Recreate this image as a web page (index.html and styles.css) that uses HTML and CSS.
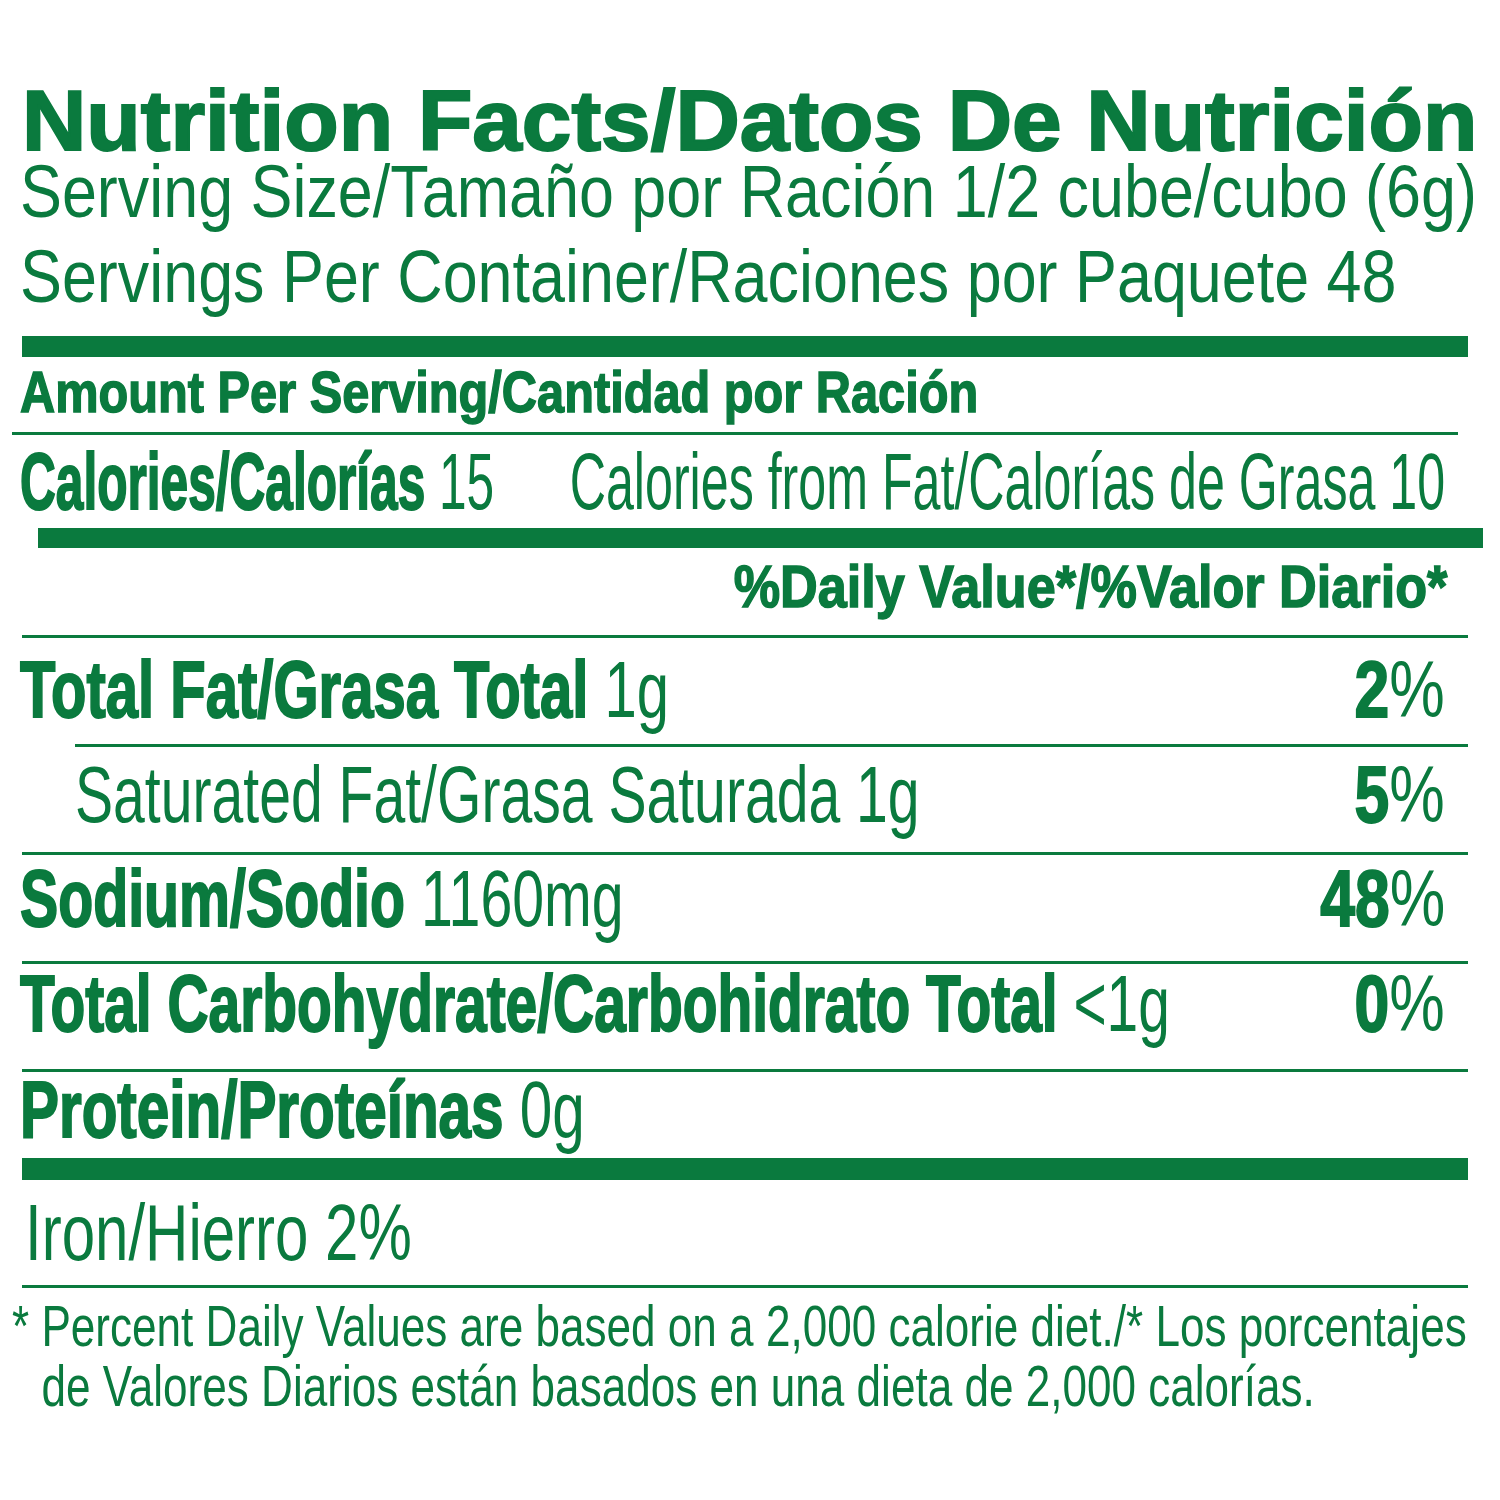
FILE: index.html
```html
<!DOCTYPE html>
<html lang="es">
<head>
<meta charset="utf-8">
<title>Nutrition Facts / Datos De Nutrición</title>
<link rel="stylesheet" href="styles.css">
</head>
<body>
<div class="label">
  <h1 class="title"><span class="sx">Nutrition Facts/Datos De Nutrición</span></h1>
  <div class="serving"><span class="sx">Serving Size/Tamaño por Ración 1/2 cube/cubo (6g)</span></div>
  <div class="serving s2"><span class="sx">Servings Per Container/Raciones por Paquete 48</span></div>

  <div class="bar bar1"></div>
  <div class="amount"><span class="sx">Amount Per Serving/Cantidad por Ración</span></div>
  <div class="rule rule-amount"></div>

  <div class="row cal">
    <div class="cell cal-left"><span class="sx"><b>Calories/Calorías</b> 15</span></div>
    <div class="cell cal-right"><span class="sx">Calories from Fat/Calorías de Grasa 10</span></div>
  </div>
  <div class="bar bar2"></div>

  <div class="dv"><span class="sx">%Daily Value*/%Valor Diario*</span></div>
  <div class="rule rule-dv"></div>

  <div class="row fat">
    <div class="cell"><span class="sx"><b>Total Fat/Grasa Total</b> 1g</span></div>
    <div class="cell pct"><span class="sx"><b>2</b>%</span></div>
  </div>
  <div class="rule rule-sub"></div>

  <div class="row sat">
    <div class="cell"><span class="sx">Saturated Fat/Grasa Saturada 1g</span></div>
    <div class="cell pct"><span class="sx"><b>5</b>%</span></div>
  </div>
  <div class="rule rule-sodium"></div>

  <div class="row sodium">
    <div class="cell"><span class="sx"><b>Sodium/Sodio</b> 1160mg</span></div>
    <div class="cell pct"><span class="sx"><b>48</b>%</span></div>
  </div>
  <div class="rule rule-carb"></div>

  <div class="row carb">
    <div class="cell"><span class="sx"><b>Total Carbohydrate/Carbohidrato Total</b> &lt;1g</span></div>
    <div class="cell pct"><span class="sx"><b>0</b>%</span></div>
  </div>
  <div class="rule rule-protein"></div>

  <div class="row protein">
    <div class="cell"><span class="sx"><b>Protein/Proteínas</b> 0g</span></div>
  </div>
  <div class="bar bar3"></div>

  <div class="iron"><span class="sx">Iron/Hierro 2%</span></div>
  <div class="rule rule-iron"></div>

  <div class="foot">
    <span class="sx">
      <span class="fn-line">* Percent Daily Values are based on a 2,000 calorie diet./* Los porcentajes</span>
      <span class="fn-line indent">de Valores Diarios están basados en una dieta de 2,000 calorías.</span>
    </span>
  </div>
</div>
</body>
</html>
```

FILE: styles.css
```css
html, body {
  margin: 0;
  padding: 0;
  background: #ffffff;
  overflow: hidden;
}

body {
  color: #0a7a3e;
  font-family: "Liberation Sans", Arial, sans-serif;
}

.label {
  margin-left: 20px;
  width: 1448px;
  padding-top: 85px;
}

.sx {
  display: inline-block;
  max-width: 100%;
  white-space: nowrap;
  transform: scaleX(var(--k, 1));
  transform-origin: left center;
}

b {
  font-weight: 700;
  -webkit-text-stroke: 2px #0a7a3e;
}

.title {
  margin: 0;
  padding-left: 2px;
  font-size: 86px;
  line-height: 70px;
  font-weight: 700;
  -webkit-text-stroke: 2px #0a7a3e;
  --k: 1.036;
}

.serving {
  margin-top: 5px;
  font-size: 75px;
  line-height: 62px;
  --k: 0.838;
}

.serving.s2 {
  margin-top: 23px;
}

.bar {
  background: #0a7a3e;
  height: 21px;
}

.bar1 {
  margin-top: 29px;
  margin-left: 2px;
}

.amount {
  margin-top: 6px;
  font-size: 58px;
  line-height: 58px;
  font-weight: 700;
  -webkit-text-stroke: 1.5px #0a7a3e;
  --k: 0.84;
}

.rule {
  background: #0a7a3e;
  height: 3px;
  margin-left: 2px;
}

.rule-amount {
  margin-top: 11px;
  margin-left: -8px;
  margin-right: 10px;
}

.row {
  display: grid;
  grid-template-columns: minmax(0, 1fr) auto;
  font-size: 80px;
  line-height: 76px;
}

.cell {
  min-width: 0;
}

.cal {
  margin-top: 9px;
}

.cal-left {
  --k: 0.62;
}

.cal-right {
  text-align: right;
  padding-right: 23px;
  --k: 0.627;
}

.cal-right .sx,
.pct .sx,
.dv .sx {
  transform-origin: right center;
}

.bar2 {
  margin-top: 8px;
  height: 20px;
  margin-left: 18px;
  margin-right: -15px;
}

.dv {
  margin-top: 9px;
  padding-right: 21px;
  text-align: right;
  font-size: 60px;
  line-height: 60px;
  font-weight: 700;
  -webkit-text-stroke: 1.5px #0a7a3e;
  --k: 0.87;
}

.rule-dv {
  margin-top: 18px;
}

.pct {
  text-align: right;
  padding-right: 23px;
  --k: 0.78;
}

.fat {
  margin-top: 14px;
  --k: 0.725;
}

.rule-sub {
  margin-top: 16px;
  margin-left: 55px;
}

.sat {
  margin-top: 10px;
  padding-left: 55px;
  --k: 0.714;
}

.rule-sodium {
  margin-top: 19px;
}

.sodium {
  margin-top: 6px;
  --k: 0.716;
}

.rule-carb {
  margin-top: 24px;
}

.carb {
  margin-top: 2px;
  --k: 0.711;
}

.rule-protein {
  margin-top: 27px;
}

.protein {
  margin-top: 0;
  --k: 0.73;
}

.bar3 {
  margin-top: 10px;
  height: 22px;
  margin-left: 2px;
}

.iron {
  margin-top: 15px;
  padding-left: 5px;
  font-size: 80px;
  line-height: 76px;
  --k: 0.75;
}

.rule-iron {
  margin-top: 14px;
}

.foot {
  margin-top: 8px;
  margin-left: -8px;
  font-size: 58px;
  line-height: 60px;
  --k: 0.76;
}

.fn-line {
  display: block;
}

.fn-line.indent {
  padding-left: 0.667em;
}
```
